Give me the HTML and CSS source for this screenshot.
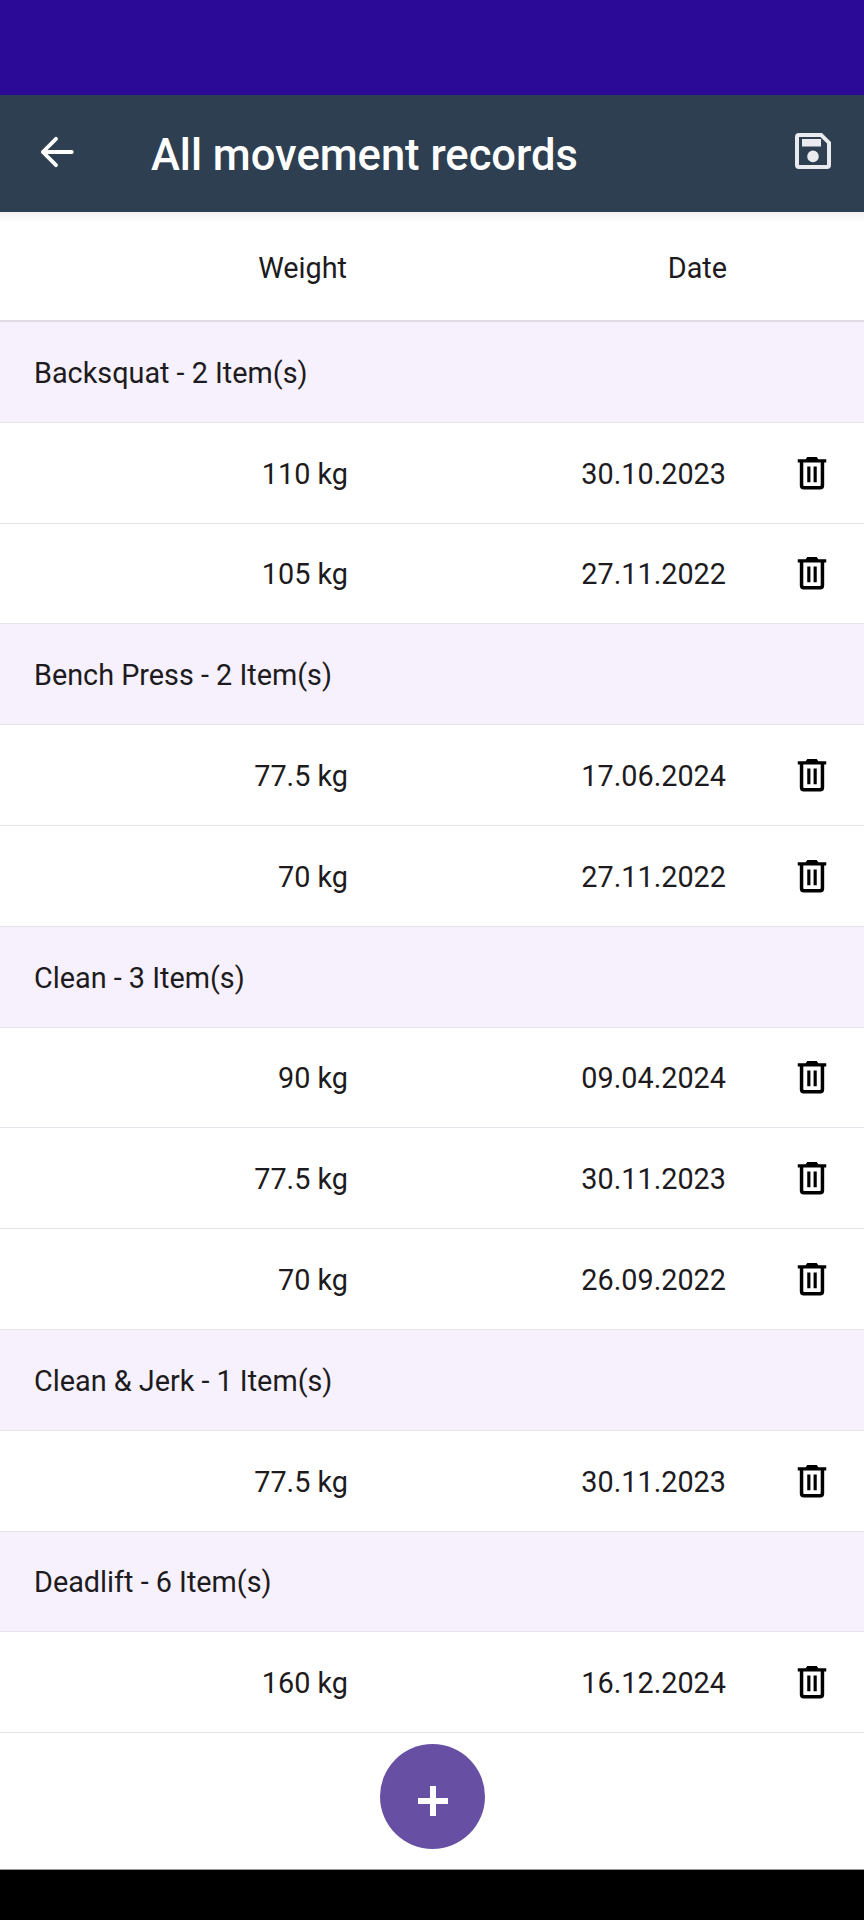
FILE: index.html
```html
<!DOCTYPE html>
<html lang="en">
<head>
<meta charset="utf-8">
<title>All movement records</title>
<link rel="stylesheet" href="styles.css">
</head>
<body>
<div class="screen">
  <div class="status"></div>
  <header class="appbar">
    <svg class="back" viewBox="0 0 24 24"><path d="M21 12H4.500M12 4.500L4.500 12l7.500 7.500"/></svg>
    <h1>All movement records</h1>
    <svg class="save" viewBox="0 0 24 24"><path fill-rule="evenodd" d="M5 3h11.500L21 7.500V19a2 2 0 0 1-2 2H5a2 2 0 0 1-2-2V5a2 2 0 0 1 2-2zm0 2v14h14V8.300L15.700 5H5zm1.500 1H16v3.800H6.500V6zm5.500 5.800a2.900 2.900 0 1 1 0 5.800 2.900 2.900 0 0 1 0-5.800z"/></svg>
  </header>
  <main class="content">
    <div class="row head"><span class="weight">Weight</span><span class="date">Date</span><span class="action"></span></div>
    <div class="group"><span>Backsquat - 2 Item(s)</span></div>
    <div class="row"><span class="weight">110 kg</span><span class="date">30.10.2023</span><span class="action"><svg class="trash" viewBox="0 0 24 24"><use href="#trash"/></svg></span></div>
    <div class="row"><span class="weight">105 kg</span><span class="date">27.11.2022</span><span class="action"><svg class="trash" viewBox="0 0 24 24"><use href="#trash"/></svg></span></div>
    <div class="group"><span>Bench Press - 2 Item(s)</span></div>
    <div class="row"><span class="weight">77.5 kg</span><span class="date">17.06.2024</span><span class="action"><svg class="trash" viewBox="0 0 24 24"><use href="#trash"/></svg></span></div>
    <div class="row"><span class="weight">70 kg</span><span class="date">27.11.2022</span><span class="action"><svg class="trash" viewBox="0 0 24 24"><use href="#trash"/></svg></span></div>
    <div class="group"><span>Clean - 3 Item(s)</span></div>
    <div class="row"><span class="weight">90 kg</span><span class="date">09.04.2024</span><span class="action"><svg class="trash" viewBox="0 0 24 24"><use href="#trash"/></svg></span></div>
    <div class="row"><span class="weight">77.5 kg</span><span class="date">30.11.2023</span><span class="action"><svg class="trash" viewBox="0 0 24 24"><use href="#trash"/></svg></span></div>
    <div class="row"><span class="weight">70 kg</span><span class="date">26.09.2022</span><span class="action"><svg class="trash" viewBox="0 0 24 24"><use href="#trash"/></svg></span></div>
    <div class="group"><span>Clean &amp; Jerk - 1 Item(s)</span></div>
    <div class="row"><span class="weight">77.5 kg</span><span class="date">30.11.2023</span><span class="action"><svg class="trash" viewBox="0 0 24 24"><use href="#trash"/></svg></span></div>
    <div class="group"><span>Deadlift - 6 Item(s)</span></div>
    <div class="row"><span class="weight">160 kg</span><span class="date">16.12.2024</span><span class="action"><svg class="trash" viewBox="0 0 24 24"><use href="#trash"/></svg></span></div>
    <button class="fab" type="button"><svg viewBox="0 0 24 24"><path d="M12 4.500v15M4.500 12h15"/></svg></button>
  </main>
  <div class="navbar"></div>
</div>
<svg class="defs" width="0" height="0"><defs><symbol id="trash" viewBox="0 0 24 24"><path fill-rule="evenodd" d="M9 2.500h6l1 1.500h5v2h-1.300v14.500a2.500 2.500 0 0 1-2.500 2.500H6.800a2.500 2.500 0 0 1-2.500-2.500V6H3V4h5l1-1.500zM6.500 6v14.200c0 .4.300.7.700.7h9.600c.4 0 .7-.3.7-.7V6h-11zM9 8.500h2v10H9v-10zm4 0h2v10h-2v-10z"/></symbol></defs></svg>
</body>
</html>
```
FILE: styles.css
```css
* { box-sizing: border-box; }
html, body { margin: 0; padding: 0; }
body { font-family: Roboto, "Liberation Sans", sans-serif; background: #000; color: #1d1b20; }
.screen { width: 864px; height: 1920px; display: flex; flex-direction: column; overflow: hidden; }
.status { height: 95px; background: #2a0a96; flex: none; }
.appbar { height: 117px; flex: none; background: #2e3f51; color: #fff; display: flex; align-items: center; position: relative; padding-left: 35px; }
.appbar h1 { margin: 4px 0 0 74px; font-size: 43.5px; font-weight: 500; line-height: 1; }
.back { width: 42px; height: 42px; fill: none; stroke: #fff; stroke-width: 2.200; stroke-linecap: round; stroke-linejoin: round; margin-top: -4px; flex: none; }
.save { width: 48px; height: 48px; fill: #e9ebef; margin-left: auto; margin-right: 27px; margin-top: -5px; flex: none; }
.content { height: 1657px; flex: none; background: #fff; position: relative; overflow: hidden; }
.content::before { content: ""; position: absolute; left: 0; right: 0; top: 0; height: 10px; background: linear-gradient(#f1f1f3, #fff); }
.row { height: 100.8px; display: grid; grid-template-columns: 348px 378px 1fr; align-items: center; border-bottom: 1px solid #e6e3ea; font-size: 28.8px; }
.weight, .date, .group > span { position: relative; top: 1px; }
.row.head { height: 110px; border-bottom: 2px solid #dfdde3; position: relative; }
.row.head .weight { left: -1px; top: 2px; }
.row.head .date { left: 1px; top: 2px; }
.group { height: 100.8px; display: flex; align-items: center; padding-left: 34px; background: #f6f1fc; border-bottom: 1px solid #e6e3ea; font-size: 28.8px; }
.weight, .date { text-align: right; }
.action { display: flex; justify-content: center; padding-left: 34px; }
.trash { width: 38px; height: 38px; fill: #000; margin-top: -2px; }
.defs { position: absolute; }
.fab { position: absolute; left: 380px; top: 1532px; width: 105px; height: 105px; padding: 0; border: 0; border-radius: 50%; background: #6750a4; display: flex; align-items: center; justify-content: center; }
.fab svg { width: 48px; height: 48px; fill: none; stroke: #fff; stroke-width: 3; margin-top: 8px; }
.navbar { flex: 1; background: #000; border-top: 1px solid #999; }
```
